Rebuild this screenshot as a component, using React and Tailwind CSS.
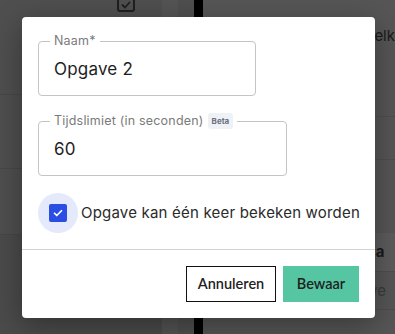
import React from 'react';

const BgPage = () => (
  <div className="flex h-[334px] w-[395px] bg-[#4f4f4f]">
    <div className="flex w-[166px] flex-col">
      <div className="h-[95px] border-b border-[#474747]">
        <div className="-mt-[3px] ml-[117px] flex h-[15px] w-[18px] items-center justify-center rounded-[3px] border-2 border-[#1f1f1f]">
          <svg width="10" height="8" viewBox="0 0 10 8" fill="none" stroke="#1f1f1f" strokeWidth="1.8" strokeLinecap="round" strokeLinejoin="round">
            <path d="M1.5 4l2.5 2.5L8.5 1.5" />
          </svg>
        </div>
      </div>
      <div className="h-[74px] border-b border-[#474747]" />
      <div className="h-[66px] border-b border-[#474747]" />
      <div className="flex-1 bg-[#4b4b4b]" />
    </div>
    <div className="w-[17px] bg-[#545454]" />
    <div className="w-[16px] bg-[#4f4f4f]" />
    <div className="w-[10px] bg-[#000000]" />
    <div className="flex flex-1 flex-col bg-[#565656] font-['Inter',sans-serif] text-[15px] text-[#1a1a1a]">
      <div className="h-[117px] border-b border-[#4e4e4e] pt-[25px] pl-[157px]">Welk</div>
      <div className="h-[43px] border-b border-[#4e4e4e]" />
      <div className="h-[73px]" />
      <div className="h-[39px] border-b border-[#4e4e4e] bg-[#5c5c5c] pt-[8px] pl-[158px] font-bold">\ca</div>
      <div className="h-[38px] border-b border-[#4e4e4e] pt-[8px] pl-[162px] text-[#3a3a3a]">we</div>
      <div className="flex-1" />
    </div>
  </div>
);

const Field = ({ label, value, width, badge }) => (
  <div className={`relative h-[55px] rounded-[4px] border border-[#c4c4c4] ${width}`}>
    <div className="absolute -top-[9px] left-[11px] flex items-center whitespace-nowrap bg-white px-[4px] text-[12.5px] leading-[16px] tracking-[0.2px] text-[#7a7a7a]">
      {label}
      {badge && (
        <span className="ml-[4px] rounded-[3px] bg-[#eef1f5] px-[4px] py-[3px] text-[8px] font-bold leading-[10px] tracking-normal text-[#6b7280]">
          {badge}
        </span>
      )}
    </div>
    <div className="flex h-full items-center pl-[15px] pt-[3px] text-[17px] tracking-[0.2px] text-[#1e1e1e]">
      {value}
    </div>
  </div>
);

export default function App() {
  return (
    <div className="relative h-[334px] w-[395px] overflow-hidden">
      <BgPage />
      <div className="absolute left-[22px] top-[17px] w-[353px] rounded-[4px] bg-white shadow-[0_8px_30px_rgba(0,0,0,0.35)] font-['Inter',sans-serif]">
        <div className="flex flex-col px-[16px] pt-[24px]">
          <Field label="Naam*" value="Opgave 2" width="w-[218px]" />
          <div className="h-[25px]" />
          <Field label="Tijdslimiet (in seconden)" value="60" width="w-[249px]" badge="Beta" />
          <div className="mt-[17px] flex items-center">
            <div className="flex h-[40px] w-[40px] shrink-0 items-center justify-center rounded-full bg-[#e4e9fb]">
              <div className="flex h-[18px] w-[18px] items-center justify-center rounded-[2px] bg-[#2a4ee3]">
                <svg width="12" height="12" viewBox="0 0 24 24" fill="none" stroke="white" strokeWidth="3.5" strokeLinecap="round" strokeLinejoin="round">
                  <path d="M5 12.5l4.5 4.5L19 7.5" />
                </svg>
              </div>
            </div>
            <span className="ml-[3px] whitespace-nowrap text-[15px] tracking-[0.2px] text-[#2a2a2a]">Opgave kan één keer bekeken worden</span>
          </div>
        </div>
        <div className="mt-[16px] border-t border-[#d3d3d3]" />
        <div className="flex justify-end gap-[7px] p-[16px] font-['Lato',sans-serif] text-[14.5px] font-semibold text-[#1f1f1f]">
          <button className="h-[36px] w-[90px] border-[1.5px] border-[#111]">Annuleren</button>
          <button className="h-[36px] w-[76px] bg-[#55c6a1]">Bewaar</button>
        </div>
      </div>
    </div>
  );
}
